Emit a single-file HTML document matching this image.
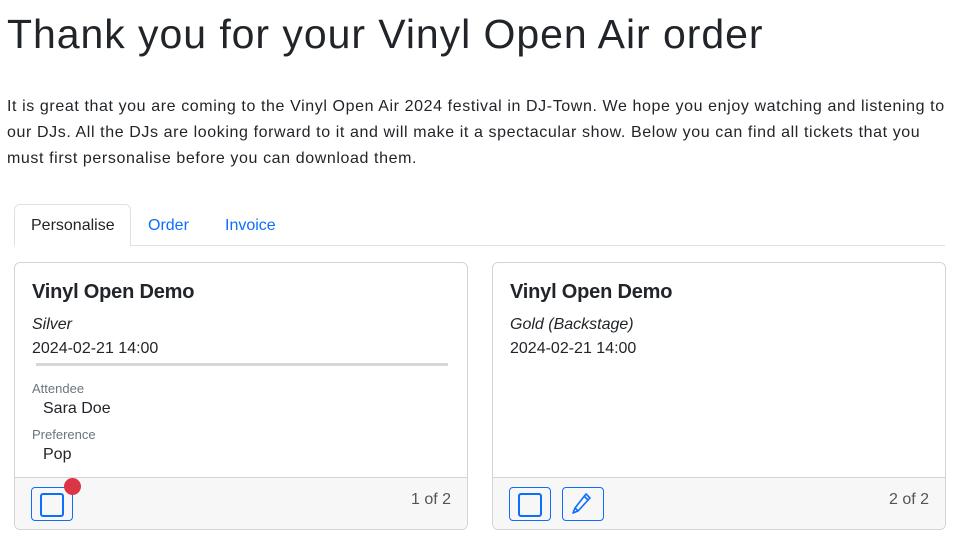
<!DOCTYPE html>
<html><head><meta charset="utf-8"><style>
*{box-sizing:border-box;margin:0;padding:0}
body{width:962px;height:542px;background:#fff;font-family:"Liberation Sans",sans-serif;color:#212529;position:relative;overflow:hidden}
.a{position:absolute;white-space:nowrap}
h1{position:absolute;left:7px;top:11px;font-size:41px;font-weight:400;letter-spacing:0.95px}
.p{left:7px;font-size:16px;letter-spacing:0.6px}
.tabline{position:absolute;left:14px;top:245px;width:931px;height:1px;background:#dee2e6}
.tab{position:absolute;left:14px;top:204px;width:117px;height:42px;border:1px solid #dee2e6;border-bottom:none;border-radius:6px 6px 0 0;background:#fff}
.card{position:absolute;top:262px;width:454px;height:268px;border:1px solid #d4d4d4;border-radius:6px;overflow:hidden}
.foot{position:absolute;left:0;right:0;bottom:0;height:52px;background:#f7f7f7;border-top:1px solid #d4d4d4}
.btn{position:absolute;top:9px;width:42px;height:34px;border:1px solid #0d6efd;border-radius:4px}
.sq{position:absolute;left:8px;top:5px;width:24px;height:24px;border:2px solid #0d6efd;border-radius:3px}
h5{position:absolute;left:17px;top:18px;font-size:20px;font-weight:700;color:#212529;letter-spacing:-0.2px}
.s{font-size:16px}
.lbl{font-size:13px;color:#6c757d}
</style></head><body>
<h1>Thank you for your Vinyl Open Air order</h1>
<div class="a p" style="top:98px">It is great that you are coming to the Vinyl Open Air 2024 festival in DJ-Town. We hope you enjoy watching and listening to</div>
<div class="a p" style="top:124px">our DJs. All the DJs are looking forward to it and will make it a spectacular show. Below you can find all tickets that you</div>
<div class="a p" style="top:150px">must first personalise before you can download them.</div>
<div class="tabline"></div>
<div class="tab"></div>
<div class="a s" style="left:31px;top:217px">Personalise</div>
<div class="a s" style="left:148px;top:217px;color:#0d6efd">Order</div>
<div class="a s" style="left:225px;top:217px;color:#0d6efd">Invoice</div>

<div class="card" style="left:14px">
<h5>Vinyl Open Demo</h5>
<div class="a s" style="left:17px;top:53px;font-style:italic">Silver</div>
<div class="a s" style="left:17px;top:77px">2024-02-21 14:00</div>
<div class="a" style="left:21px;top:100px;width:412px;height:3px;background:#d6d6d6"></div>
<div class="a lbl" style="left:17px;top:118px">Attendee</div>
<div class="a s" style="left:28px;top:137px">Sara Doe</div>
<div class="a lbl" style="left:17px;top:164px">Preference</div>
<div class="a s" style="left:28px;top:183px">Pop</div>
<div class="foot">
<div class="btn" style="left:16px"><div class="sq"></div></div>
<div class="a" style="left:49px;top:0px;width:17px;height:17px;border-radius:50%;background:#dc3545"></div>
<div class="a s" style="right:16px;top:13px;color:#555">1 of 2</div>
</div></div>

<div class="card" style="left:492px">
<h5>Vinyl Open Demo</h5>
<div class="a s" style="left:17px;top:53px;font-style:italic">Gold (Backstage)</div>
<div class="a s" style="left:17px;top:77px">2024-02-21 14:00</div>
<div class="foot">
<div class="btn" style="left:16px"><div class="sq"></div></div>
<div class="btn" style="left:69px"><svg width="42" height="34" viewBox="0 0 42 34" style="position:absolute;left:-1px;top:-1px"><path d="M24 7 L28 11 L16 24 L11 26 L13 21 Z M22 9 L26 13 M13 21 L16 24" fill="none" stroke="#0d6efd" stroke-width="1.6" stroke-linejoin="round"/></svg></div>
<div class="a s" style="right:16px;top:13px;color:#555">2 of 2</div>
</div></div>
</body></html>
